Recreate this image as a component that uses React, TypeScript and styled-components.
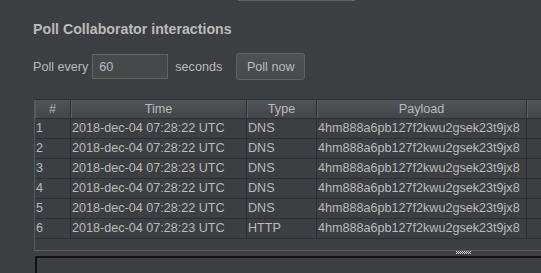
import { Fragment } from "react";
import styled, { createGlobalStyle } from "styled-components";

const GlobalStyle = createGlobalStyle`
  html, body {
    margin: 0;
    background: #3c3f41;
    overflow: hidden;
    font-family: "Liberation Sans", Arial, sans-serif;
    color: #bbbbbb;
  }
`;

const Page = styled.div`
  width: 541px;
  height: 273px;
  display: flex;
  flex-direction: column;
`;

const TopEdge = styled.div`
  height: 1px;
  width: 117px;
  margin-left: 238px;
  background: #5f6365;
`;

const Title = styled.h3`
  margin: 20px 0 0 33px;
  font-size: 14.2px;
  font-weight: bold;
  line-height: 17px;
  color: #bbbbbb;
`;

const PollRow = styled.div`
  display: flex;
  align-items: center;
  margin: 15px 0 0 33px;
  font-size: 12.6px;
`;

const Label = styled.span`
  margin-right: 4px;
`;

const NumberInput = styled.input`
  box-sizing: border-box;
  width: 76px;
  height: 25px;
  margin-right: 7px;
  padding: 0 6px;
  border: 1px solid #646464;
  background: #45494a;
  color: #bbbbbb;
  font: 12.6px "Liberation Sans", Arial, sans-serif;
  outline: none;
`;

const Button = styled.button`
  box-sizing: border-box;
  width: 69px;
  height: 27px;
  margin-left: 14px;
  border: 1px solid #5e6264;
  border-radius: 3px;
  background: linear-gradient(#4d5153, #464a4c);
  color: #bbbbbb;
  font: 12.6px "Liberation Sans", Arial, sans-serif;
  padding: 0;
`;

const ScrollPane = styled.div`
  margin: 19px 0 0 34px;
  height: 150px;
  border-top: 1px solid #2e3032;
  border-left: 1px solid #56595b;
  border-bottom: 1px solid #5a5d5f;
  overflow: hidden;
`;

const Grid = styled.div`
  display: grid;
  grid-template-columns: 36px 176px 70px 210px 60px;
`;

const HeadCell = styled.div`
  box-sizing: border-box;
  height: 19px;
  line-height: 18px;
  text-align: center;
  font-size: 12.6px;
  background: linear-gradient(#505456, #44474a);
  border-right: 1px solid #2d2f31;
  border-bottom: 1px solid #2d2f31;
  box-shadow: inset 1px 0 0 #5a5e60;
`;

const Cell = styled.div`
  box-sizing: border-box;
  height: 20px;
  line-height: 19px;
  padding-left: 1px;
  font-size: 12.6px;
  white-space: nowrap;
  overflow: hidden;
  border-right: 1px solid #2d2f31;
  border-bottom: 1px solid #2d2f31;
`;

const Divider = styled.div`
  height: 5px;
  display: flex;
  padding-left: 456px;
`;

const BottomPanel = styled.div`
  flex: 1;
  margin-left: 35px;
  border-top: 2px solid #111111;
  border-left: 2px solid #111111;
`;

const Grip = () => (
  <svg width="15" height="3" viewBox="0 0 15 3">
    {Array.from({ length: 15 }).map((_, i) =>
      [0, 1, 2].map((j) =>
        (i + j) % 2 === 0 ? (
          <rect key={`${i}-${j}`} x={i} y={j} width="1" height="1" fill="#d8d8d8" />
        ) : null
      )
    )}
  </svg>
);

const rows = [
  ["1", "2018-dec-04 07:28:22 UTC", "DNS"],
  ["2", "2018-dec-04 07:28:22 UTC", "DNS"],
  ["3", "2018-dec-04 07:28:23 UTC", "DNS"],
  ["4", "2018-dec-04 07:28:22 UTC", "DNS"],
  ["5", "2018-dec-04 07:28:22 UTC", "DNS"],
  ["6", "2018-dec-04 07:28:23 UTC", "HTTP"],
];

const payload = "4hm888a6pb127f2kwu2gsek23t9jx8";

export default function App() {
  return (
    <>
      <GlobalStyle />
      <Page>
        <TopEdge />
        <Title>Poll Collaborator interactions</Title>
        <PollRow>
          <Label>Poll every</Label>
          <NumberInput defaultValue="60" />
          <span>seconds</span>
          <Button>Poll now</Button>
        </PollRow>
        <ScrollPane>
          <Grid>
            <HeadCell>#</HeadCell>
            <HeadCell>Time</HeadCell>
            <HeadCell>Type</HeadCell>
            <HeadCell>Payload</HeadCell>
            <HeadCell />
            {rows.map(([n, time, type]) => (
              <Fragment key={n}>
                <Cell>{n}</Cell>
                <Cell>{time}</Cell>
                <Cell>{type}</Cell>
                <Cell>{payload}</Cell>
                <Cell />
              </Fragment>
            ))}
          </Grid>
        </ScrollPane>
        <Divider>
          <Grip />
        </Divider>
        <BottomPanel />
      </Page>
    </>
  );
}
